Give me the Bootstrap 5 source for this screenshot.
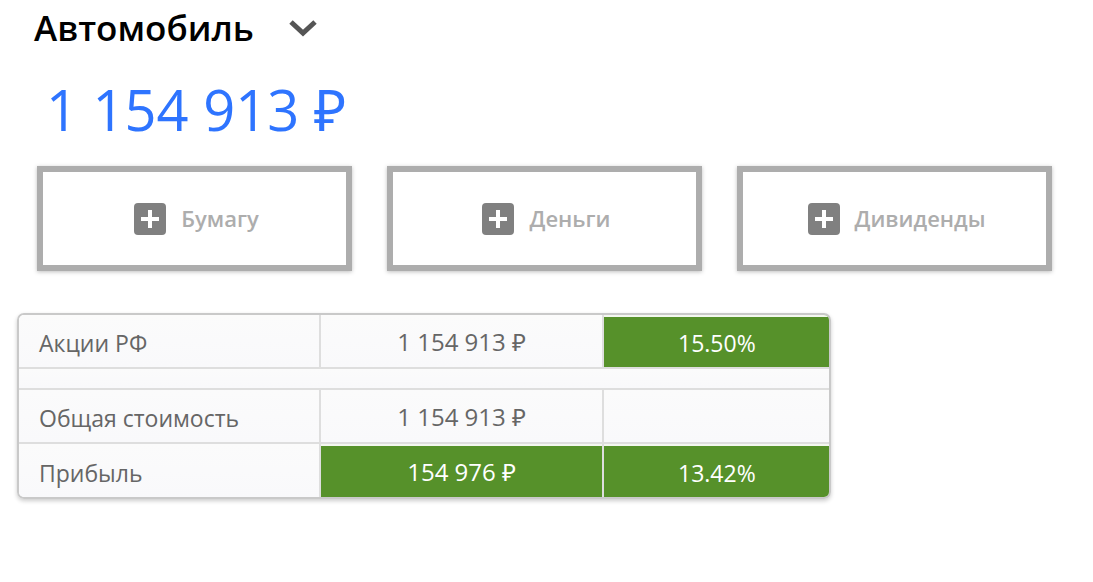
<!DOCTYPE html>
<html lang="ru">
<head>
<meta charset="utf-8">
<meta name="viewport" content="width=device-width, initial-scale=1">
<title>Автомобиль</title>
<link href="https://cdn.jsdelivr.net/npm/bootstrap@5.3.0/dist/css/bootstrap.min.css" rel="stylesheet">
<style>
  body { font-family: "Trebuchet MS", "Open Sans", "Noto Sans", sans-serif; background: #fff; }
  .portfolio-head { padding: 4px 34px 0; gap: 35px; }
  .portfolio-title { font-size: 35px; line-height: 48px; color: #000; }
  .portfolio-total { font-size: 56px; line-height: 72px; color: #2e74ff; padding: 21px 46px 0; }
  .actions { padding: 21px 41px 0 37px; }
  .actions .row { --bs-gutter-x: 35px; --bs-gutter-y: 20px; }
  .btn-add { height: 105px; padding: 0 0 0 4px; border: 6px solid #adadad; color: #adadad; background: #fff; font-size: 22px; gap: 15px; box-shadow: 0 1px 4px rgba(0,0,0,.25); }
  .btn-add:hover { border-color: #999; color: #888; }
  .summary { width: 74.5%; margin: 42px 0 40px 17px; border: 2px solid #c9c9c9; border-radius: 7px; box-shadow: 0 2px 4px rgba(0,0,0,.2); }
  .summary table { table-layout: fixed; border-collapse: separate; border-spacing: 0; font-size: 23px; line-height: 32px; color: #666; }
  .summary th, .summary td { height: 54px; padding: 4px 20px 0; border-bottom: 2px solid #dedede; border-left: 2px solid #dedede; background: linear-gradient(#fbfbfb, #f9f9fb); }
  .summary tr > :first-child { border-left: 0; }
  .summary tr:last-child > * { height: 53px; border-bottom: 0; }
  .summary td.amount { padding: 2px 20px 0; font-size: 24px; }
  .summary td.gain { background: #56912a; color: #fff; box-shadow: inset 0 2px 0 #f3f7ef; }
  .summary td.spacer { height: 21px; padding: 0; }
  .col-name { width: 37%; }
  .col-share { width: 28%; }
</style>
</head>
<body>
<header class="portfolio-head d-flex align-items-center">
  <h1 class="portfolio-title fw-semibold m-0">Автомобиль</h1>
  <button class="btn p-0 border-0 d-flex" type="button" aria-label="Выбрать портфель">
    <svg width="28" height="20" viewBox="0 0 28 20" fill="none" stroke="#555" stroke-width="5"><path d="M2 4L14 15L26 4"/></svg>
  </button>
</header>
<main>
  <div class="portfolio-total">1 154 913 ₽</div>
  <div class="actions">
    <div class="row row-cols-1 row-cols-md-3">
      <div class="col"><button type="button" class="btn btn-add w-100 rounded-0 fw-semibold d-flex align-items-center justify-content-center">
        <svg width="32" height="32" viewBox="0 0 32 32"><rect width="32" height="32" rx="4" fill="#808080"/><path d="M16 7V25M7 16H25" stroke="#fff" stroke-width="4"/></svg>
        <span>Бумагу</span></button></div>
      <div class="col"><button type="button" class="btn btn-add w-100 rounded-0 fw-semibold d-flex align-items-center justify-content-center">
        <svg width="32" height="32" viewBox="0 0 32 32"><rect width="32" height="32" rx="4" fill="#808080"/><path d="M16 7V25M7 16H25" stroke="#fff" stroke-width="4"/></svg>
        <span>Деньги</span></button></div>
      <div class="col"><button type="button" class="btn btn-add w-100 rounded-0 fw-semibold d-flex align-items-center justify-content-center">
        <svg width="32" height="32" viewBox="0 0 32 32"><rect width="32" height="32" rx="4" fill="#808080"/><path d="M16 7V25M7 16H25" stroke="#fff" stroke-width="4"/></svg>
        <span>Дивиденды</span></button></div>
    </div>
  </div>
  <div class="summary overflow-hidden">
    <table class="w-100 align-middle">
      <colgroup><col class="col-name"><col><col class="col-share"></colgroup>
      <tbody>
        <tr><th scope="row" class="fw-normal">Акции РФ</th><td class="amount text-center">1 154 913 ₽</td><td class="gain text-center">15.50%</td></tr>
        <tr><td class="spacer" colspan="3"></td></tr>
        <tr><th scope="row" class="fw-normal">Общая стоимость</th><td class="amount text-center">1 154 913 ₽</td><td></td></tr>
        <tr><th scope="row" class="fw-normal">Прибыль</th><td class="amount gain text-center">154 976 ₽</td><td class="gain text-center">13.42%</td></tr>
      </tbody>
    </table>
  </div>
</main>
<script src="https://cdn.jsdelivr.net/npm/bootstrap@5.3.0/dist/js/bootstrap.bundle.min.js"></script>
</body>
</html>
